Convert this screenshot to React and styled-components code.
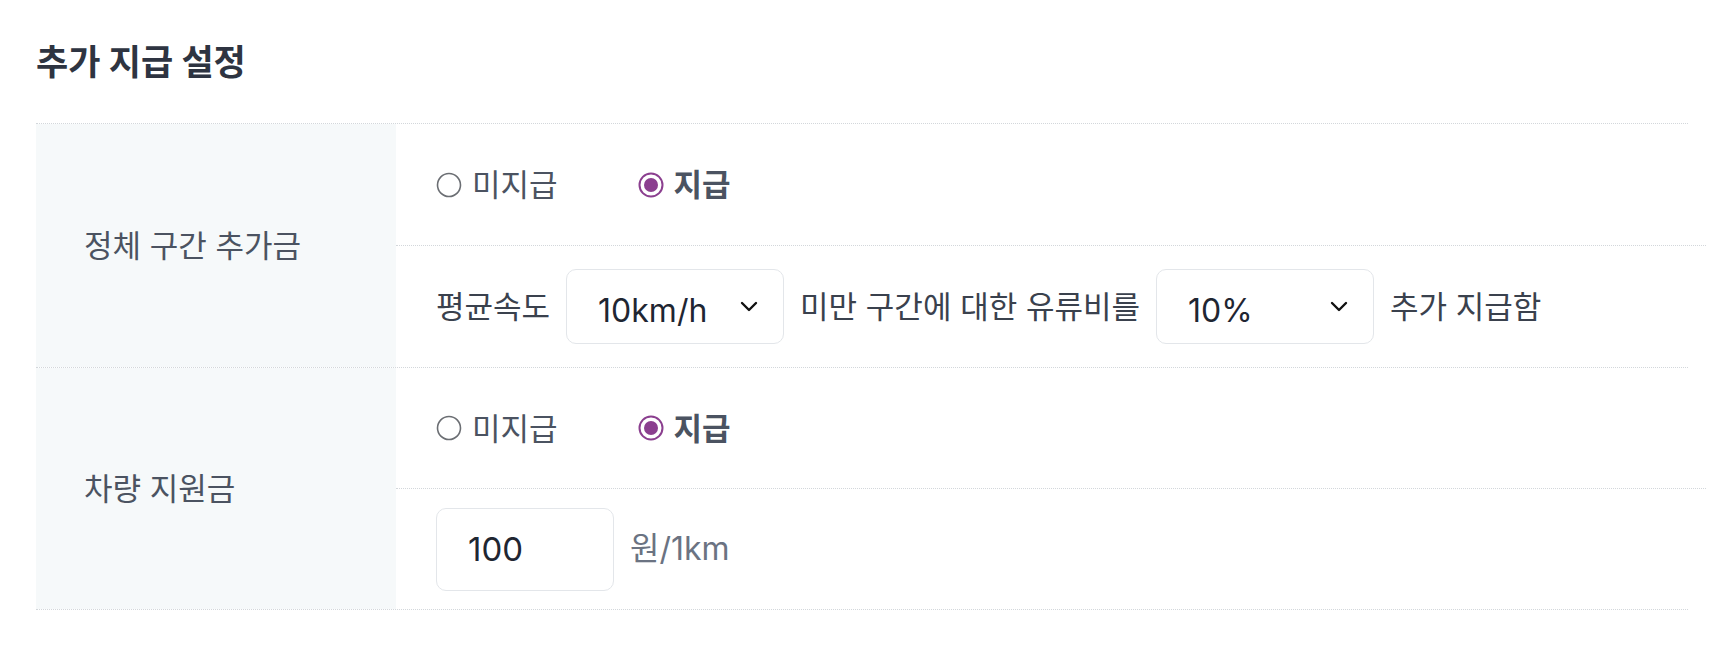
import styled, { createGlobalStyle } from "styled-components";

const GlobalStyle = createGlobalStyle`
  body {
    margin: 0;
    background: #ffffff;
    font-family: "Inter", "Noto Sans CJK KR", sans-serif;
  }
`;

const Page = styled.div`
  padding: 36px 0 0 36px;
`;

const Title = styled.h2`
  margin: 0 0 35px 0;
  font-size: 35px;
  line-height: 52px;
  font-weight: 700;
  color: #2e3441;
`;

const Table = styled.div`
  width: 1652px;
  border-top: 1px dotted #d3d7db;
`;

const Section = styled.div`
  display: grid;
  grid-template-columns: 360px 1fr;
  border-bottom: 1px dotted #d3d7db;
`;

const Label = styled.div`
  display: flex;
  align-items: center;
  padding-left: 48px;
  background: #f6f9fa;
  font-size: 31px;
  line-height: 1;
  color: #4b5361;
`;

const Body = styled.div`
  display: flex;
  flex-direction: column;
`;

const Line = styled.div`
  height: ${(p) => p.$h || 121}px;
  display: flex;
  align-items: center;
  gap: 16px;
  padding-left: 40px;
  margin-right: -18px;
  font-size: 31px;
  line-height: 1;
  color: #3a414d;

  & + & {
    border-top: 1px dotted #d3d7db;
  }
`;

const RadioGroup = styled.div`
  display: flex;
  align-items: center;
  gap: 80px;
`;

const RadioOption = styled.label`
  display: flex;
  align-items: center;
  gap: 10px;
  font-size: 31px;
  color: #4b5361;
  font-weight: ${(p) => (p.$checked ? 700 : 400)};
`;

const Select = styled.div`
  width: 218px;
  height: 75px;
  box-sizing: border-box;
  border: 1.5px solid #e3e6ea;
  border-radius: 10px;
  display: flex;
  align-items: center;
  justify-content: space-between;
  padding: 0 25px 0 31px;
  background: #fff;
`;

const SelectValue = styled.span`
  padding-top: 8px;
  font-size: 32px;
  color: #1f2632;
`;

const Input = styled.div`
  width: 178px;
  height: 83px;
  box-sizing: border-box;
  border: 1.5px solid #e3e6ea;
  border-radius: 10px;
  display: flex;
  align-items: center;
  padding-left: 31px;
  font-size: 33px;
  color: #1f2632;
`;

const Unit = styled.span`
  font-size: 32px;
  color: #6b7382;
`;

const Radio = ({ checked }) =>
  checked ? (
    <svg width="26" height="26" viewBox="0 0 26 26">
      <circle cx="13" cy="13" r="11.5" fill="#fff" stroke="#8b3f8f" strokeWidth="2" />
      <circle cx="13" cy="13" r="7" fill="#8b3f8f" />
    </svg>
  ) : (
    <svg width="26" height="26" viewBox="0 0 26 26">
      <circle cx="13" cy="13" r="11.5" fill="#fff" stroke="#6b6e73" strokeWidth="1.6" />
    </svg>
  );

const Chevron = () => (
  <svg width="18" height="11" viewBox="0 0 18 11">
    <path d="M2 2 L9 9 L16 2" fill="none" stroke="#111" strokeWidth="2.4" strokeLinecap="round" strokeLinejoin="round" />
  </svg>
);

const PayRadios = () => (
  <RadioGroup>
    <RadioOption>
      <Radio />
      미지급
    </RadioOption>
    <RadioOption $checked>
      <Radio checked />
      지급
    </RadioOption>
  </RadioGroup>
);

export default function App() {
  return (
    <>
      <GlobalStyle />
      <Page>
        <Title>추가 지급 설정</Title>
        <Table>
          <Section>
            <Label>정체 구간 추가금</Label>
            <Body>
              <Line>
                <PayRadios />
              </Line>
              <Line>
                <span>평균속도</span>
                <Select>
                  <SelectValue>10km/h</SelectValue>
                  <Chevron />
                </Select>
                <span>미만 구간에 대한 유류비를</span>
                <Select>
                  <SelectValue>10%</SelectValue>
                  <Chevron />
                </Select>
                <span>추가 지급함</span>
              </Line>
            </Body>
          </Section>
          <Section>
            <Label>차량 지원금</Label>
            <Body>
              <Line $h={120}>
                <PayRadios />
              </Line>
              <Line $h={120}>
                <Input>100</Input>
                <Unit>원/1km</Unit>
              </Line>
            </Body>
          </Section>
        </Table>
      </Page>
    </>
  );
}
